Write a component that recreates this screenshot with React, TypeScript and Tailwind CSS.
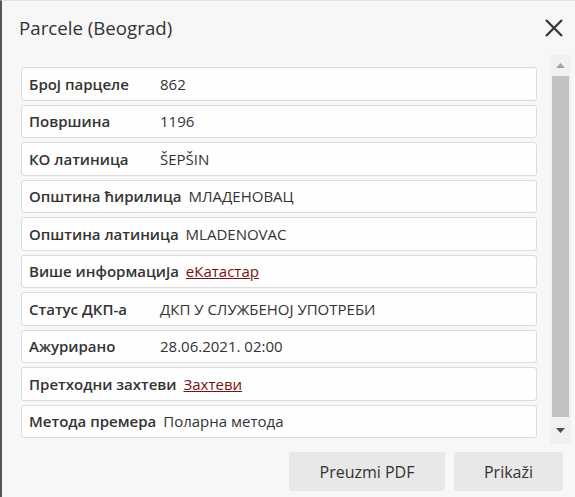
import React from "react";

const rows: { label: string; value: string; link?: boolean }[] = [
  { label: "Број парцеле", value: "862" },
  { label: "Површина", value: "1196" },
  { label: "КО латиница", value: "ŠEPŠIN" },
  { label: "Општина ћирилица", value: "МЛАДЕНОВАЦ" },
  { label: "Општина латиница", value: "MLADENOVAC" },
  { label: "Више информација", value: "еКатастар", link: true },
  { label: "Статус ДКП-а", value: "ДКП У СЛУЖБЕНОЈ УПОТРЕБИ" },
  { label: "Ажурирано", value: "28.06.2021. 02:00" },
  { label: "Претходни захтеви", value: "Захтеви", link: true },
  { label: "Метода премера", value: "Поларна метода" },
];

export default function App() {
  return (
    <div
      className="w-[575px] h-[497px] bg-[#f7f7f7] border-l-2 border-l-[#57544c] border-t border-t-[#e2e2e2] flex flex-col text-[#333]"
      style={{ fontFamily: '"Open Sans", "Noto Sans", sans-serif' }}
    >
      <div className="h-[54px] flex items-center justify-between pl-[17px] pr-[11px]">
        <div className="text-[18.7px] text-[#333] leading-none">Parcele (Beograd)</div>
        <svg width="20" height="20" viewBox="0 0 20 20" className="mt-[-1px]">
          <path d="M2 2 L18 18 M18 2 L2 18" stroke="#3a3a3a" strokeWidth="2.4" strokeLinecap="butt" />
        </svg>
      </div>
      <div className="flex pl-[19px] h-[390px]">
        <div className="w-[516px] pt-[12px] flex flex-col gap-[4px]">
          {rows.map((r) => (
            <div
              key={r.label}
              className="h-[33.5px] bg-[#fefefe] border border-[#dcdcdc] rounded-[3px] flex items-center pl-[7px] text-[15px]"
            >
              <span className="font-semibold min-w-[124px] mr-[7px] text-[#333]">{r.label}</span>
              {r.link ? (
                <span className="text-[#7b1010] underline">{r.value}</span>
              ) : (
                <span className="text-[#333]">{r.value}</span>
              )}
            </div>
          ))}
        </div>
        <div className="ml-[13px] w-[21px] h-[389px] bg-[#f1f1f1] flex flex-col items-center">
          <div className="h-[21px] flex items-center justify-center">
            <svg width="9" height="5" viewBox="0 0 9 5">
              <path d="M0 5 L4.5 0 L9 5 Z" fill="#a3a3a3" />
            </svg>
          </div>
          <div className="w-[17px] h-[341px] bg-[#c1c1c1]" />
          <div className="flex-1 flex items-center justify-center">
            <svg width="9" height="5" viewBox="0 0 9 5">
              <path d="M0 0 L9 0 L4.5 5 Z" fill="#505050" />
            </svg>
          </div>
        </div>
      </div>
      <div className="flex justify-end gap-[9px] pr-[12px] pt-[7px]">
        <button className="w-[156px] h-[39px] bg-[#e8e8e8] rounded-[3px] text-[16px] text-[#333]">Preuzmi PDF</button>
        <button className="w-[109px] h-[39px] bg-[#e8e8e8] rounded-[3px] text-[16px] text-[#333]">Prikaži</button>
      </div>
    </div>
  );
}
